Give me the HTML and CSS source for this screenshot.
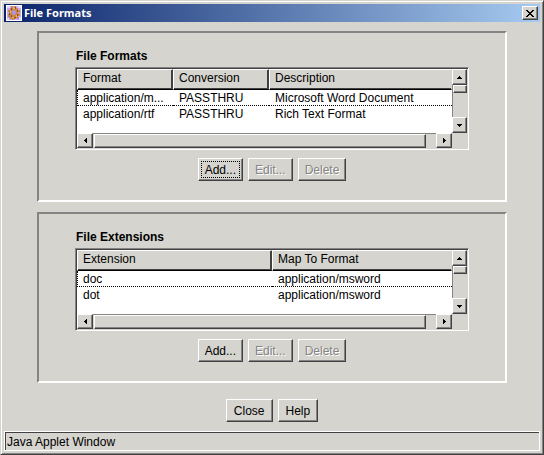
FILE: index.html
```html
<!DOCTYPE html>
<html lang="en">
<head>
<meta charset="utf-8">
<title>File Formats</title>
<link rel="stylesheet" href="styles.css">
</head>
<body>
<div class="window">
  <header class="titlebar">
    <svg class="app-icon" viewBox="0 0 16 16" aria-hidden="true" shape-rendering="crispEdges">
      <path fill="#fff" d="M0 0h16v16H0z"/>
      <path fill="#c8a8f0" d="M1 1h14v14H1z"/>
      <path fill="#e4d8fa" d="M1 1h3v2H1zM12 1h3v2h-3zM1 13h2v2H1zM13 12h2v3h-2z"/>
      <path fill="#a47ce0" d="M2 5h2v2H2zM12 5h2v3h-2zM3 11h2v2H3zM11 12h2v2h-2z"/>
      <path fill="#c98746" d="M5 1h2v2h1V1h2v2h2v2h2v2h-1v2h1v2h-2v2h-2v1H8v1H6v-1H4v-2H2V9h1V7H2V5h2V3h1z"/>
      <path fill="#8a4a30" d="M5 3h1v2H5zM9 2h1v2H9zM11 5h1v2h-1zM3 8h1v2H3zM5 10h1v2H5zM8 12h2v1H8zM11 9h1v2h-1z"/>
      <path fill="#f0b45c" d="M7 3h2v1H7zM4 6h1v2H4zM12 7h1v1h-1zM6 12h2v1H6zM10 10h1v2h-1z"/>
      <path fill="#b491dc" d="M7 5h2v1h1v3H9v1H7V9H6V6h1z"/>
    </svg>
    <h1 class="title">File Formats</h1>
    <button class="close-box" type="button" aria-label="Close window">
      <svg class="cross" viewBox="0 0 8 7" aria-hidden="true" shape-rendering="crispEdges"><path d="M0 0h2v1h1v1h2V1h1V0h2v1H7v1H6v1H5v1h1v1h1v1h1v1H6V6H5V5H3v1H2v1H0V6h1V5h1V4h1V3H2V2H1V1H0z"/></svg>
    </button>
  </header>

  <main class="content">
    <section class="panel" aria-labelledby="formats-label">
      <h2 class="label" id="formats-label">File Formats</h2>
      <div class="listbox">
        <div class="view">
          <table class="grid">
            <colgroup><col class="col-format"><col class="col-conversion"><col></colgroup>
            <thead><tr><th>Format</th><th>Conversion</th><th>Description</th></tr></thead>
            <tbody>
              <tr class="focused"><td>application/m...</td><td>PASSTHRU</td><td>Microsoft Word Document</td></tr>
              <tr><td>application/rtf</td><td>PASSTHRU</td><td>Rich Text Format</td></tr>
            </tbody>
          </table>
        </div>
        <div class="vscroll">
          <button class="arrow" type="button" aria-label="Scroll up"><svg class="tri" viewBox="0 0 5 3"><path d="M2 0h1v1h1v1h1v1H0V2h1V1h1z"/></svg></button>
          <div class="track"><div class="thumb"></div></div>
          <button class="arrow" type="button" aria-label="Scroll down"><svg class="tri" viewBox="0 0 5 3"><path d="M0 0h5v1H4v1H3v1H2V2H1V1H0z"/></svg></button>
        </div>
        <div class="hscroll">
          <button class="arrow" type="button" aria-label="Scroll left"><svg class="tri side" viewBox="0 0 3 5"><path d="M3 0v5H2V4H1V3H0V2h1V1h1V0z"/></svg></button>
          <div class="track"><div class="thumb"></div></div>
          <button class="arrow" type="button" aria-label="Scroll right"><svg class="tri side" viewBox="0 0 3 5"><path d="M0 0v5h1V4h1V3h1V2H2V1H1V0z"/></svg></button>
        </div>
      </div>
      <div class="buttons">
        <button class="btn default" type="button">Add...</button>
        <button class="btn" type="button" disabled>Edit...</button>
        <button class="btn" type="button" disabled>Delete</button>
      </div>
    </section>

    <section class="panel" aria-labelledby="extensions-label">
      <h2 class="label" id="extensions-label">File Extensions</h2>
      <div class="listbox">
        <div class="view">
          <table class="grid">
            <colgroup><col class="col-extension"><col></colgroup>
            <thead><tr><th>Extension</th><th>Map To Format</th></tr></thead>
            <tbody>
              <tr class="focused"><td>doc</td><td>application/msword</td></tr>
              <tr><td>dot</td><td>application/msword</td></tr>
            </tbody>
          </table>
        </div>
        <div class="vscroll">
          <button class="arrow" type="button" aria-label="Scroll up"><svg class="tri" viewBox="0 0 5 3"><path d="M2 0h1v1h1v1h1v1H0V2h1V1h1z"/></svg></button>
          <div class="track"><div class="thumb"></div></div>
          <button class="arrow" type="button" aria-label="Scroll down"><svg class="tri" viewBox="0 0 5 3"><path d="M0 0h5v1H4v1H3v1H2V2H1V1H0z"/></svg></button>
        </div>
        <div class="hscroll">
          <button class="arrow" type="button" aria-label="Scroll left"><svg class="tri side" viewBox="0 0 3 5"><path d="M3 0v5H2V4H1V3H0V2h1V1h1V0z"/></svg></button>
          <div class="track"><div class="thumb"></div></div>
          <button class="arrow" type="button" aria-label="Scroll right"><svg class="tri side" viewBox="0 0 3 5"><path d="M0 0v5h1V4h1V3h1V2H2V1H1V0z"/></svg></button>
        </div>
      </div>
      <div class="buttons">
        <button class="btn" type="button">Add...</button>
        <button class="btn" type="button" disabled>Edit...</button>
        <button class="btn" type="button" disabled>Delete</button>
      </div>
    </section>

    <div class="buttons dialog-buttons">
      <button class="btn" type="button">Close</button>
      <button class="btn" type="button">Help</button>
    </div>
  </main>

  <footer class="status">Java Applet Window</footer>
</div>
</body>
</html>
```
FILE: styles.css
```css
:root {
  --face: #d5d4ce;
  --light: #ffffff;
  --shade: #848484;
  --dark: #424142;
}

* { box-sizing: border-box; }

body {
  margin: 0;
  font: 12px/16px "Liberation Sans", Arial, sans-serif;
  color: #000;
  background: var(--face);
}

button { font: inherit; color: inherit; border-radius: 0; }

.window {
  display: flex;
  flex-direction: column;
  min-height: 100vh;
  padding: 2px;
  background: var(--face);
  border: 1px solid;
  border-color: var(--face) var(--dark) var(--dark) var(--face);
  box-shadow: inset 1px 1px var(--light), inset -1px -1px var(--shade);
}

.titlebar {
  display: flex;
  align-items: center;
  gap: 2px;
  height: 18px;
  margin: 1px 1px 0;
  padding: 0 2px;
  background: linear-gradient(to right, #0a246a, #a6caf0);
}

.app-icon { width: 16px; height: 16px; }

.title {
  flex: 1;
  margin: 0;
  font: bold 11px/16px "Noto Sans", Tahoma, sans-serif;
  color: #fff;
}

.close-box {
  display: flex;
  align-items: center;
  justify-content: center;
  width: 16px;
  height: 14px;
  padding: 0;
  border: 1px solid;
  border-color: var(--light) var(--dark) var(--dark) var(--light);
  box-shadow: inset -1px -1px var(--shade);
  background: var(--face);
}

.cross { width: 8px; height: 7px; }

.content {
  flex: 1;
  display: flex;
  flex-direction: column;
  gap: 10px;
  padding: 9px 34px 8px;
}

.panel {
  padding: 15px 36px 19px;
  border: 2px solid;
  border-color: var(--shade) var(--light) var(--light) var(--shade);
}

.label {
  margin: 0 0 3px 1px;
  font-size: 12px;
  line-height: 16px;
}

.listbox {
  display: grid;
  grid-template-columns: 1fr 15px;
  grid-template-rows: 64px 15px;
  border: 1px solid;
  border-color: var(--shade) var(--light) var(--light) var(--shade);
  padding: 1px;
  box-shadow: inset 1px 1px var(--dark);
}

.view { overflow: hidden; background: #fff; }

.grid {
  width: 100%;
  table-layout: fixed;
  border-collapse: separate;
  border-spacing: 0;
}

.col-format { width: 96px; }
.col-conversion { width: 96px; }
.col-extension { width: 195px; }

.grid th,
.grid td {
  white-space: nowrap;
  text-align: left;
  font-weight: normal;
}

.grid th {
  height: 21px;
  padding: 0 5px 3px 5px;
  background: var(--face);
  border: 1px solid;
  border-color: var(--light) var(--dark) #000 var(--light);
  box-shadow: inset -1px -1px var(--dark);
}

.grid th:last-child { box-shadow: inset 0 -1px var(--dark); border-right-color: var(--face); }

.grid td { height: 16px; padding: 0 0 0 6px; line-height: 16px; }

.focused td { padding-top: 1px; line-height: 14px; border-bottom: 1px dotted #000; }
.focused td:first-child { border-left: 1px dotted #000; padding-left: 5px; }

.vscroll, .hscroll { display: flex; background: var(--face); }
.vscroll { flex-direction: column; }

.track { flex: 1; display: flex; }
.vscroll .track { flex-direction: column; border-left: 1px solid var(--shade); }
.hscroll .track { border-top: 1px solid var(--shade); padding-left: 1px; }

.arrow, .thumb {
  border: 1px solid;
  border-color: var(--light) var(--dark) var(--dark) var(--light);
  box-shadow: inset -1px -1px var(--shade);
  background: var(--face);
}

.arrow {
  display: flex;
  align-items: center;
  justify-content: center;
  flex: none;
  padding: 0;
}

.vscroll .arrow { width: 15px; height: 16px; }
.hscroll .arrow { width: 16px; height: 15px; }

.tri { width: 5px; height: 3px; shape-rendering: crispEdges; }
.tri.side { width: 3px; height: 5px; }

.vscroll .thumb { height: 8px; }
.hscroll .thumb { width: 97%; }

.buttons {
  display: flex;
  justify-content: center;
  gap: 5px;
  margin-top: 8px;
}

.dialog-buttons { margin-top: 6px; }

.btn {
  height: 23px;
  padding: 0 6px;
  border: 1px solid;
  border-color: var(--light) var(--dark) var(--dark) var(--light);
  box-shadow: inset -1px -1px var(--shade);
  background: var(--face);
}

.dialog-buttons .btn { padding: 0 7px; }

.btn:disabled { color: var(--shade); text-shadow: 1px 1px var(--light); }

.default { outline: 1px dotted #000; outline-offset: -4px; }

.status {
  margin: 0 1px 1px;
  padding: 2px 2px 0;
  border: 1px solid var(--light);
  box-shadow: inset 1px 1px var(--dark);
}
```
